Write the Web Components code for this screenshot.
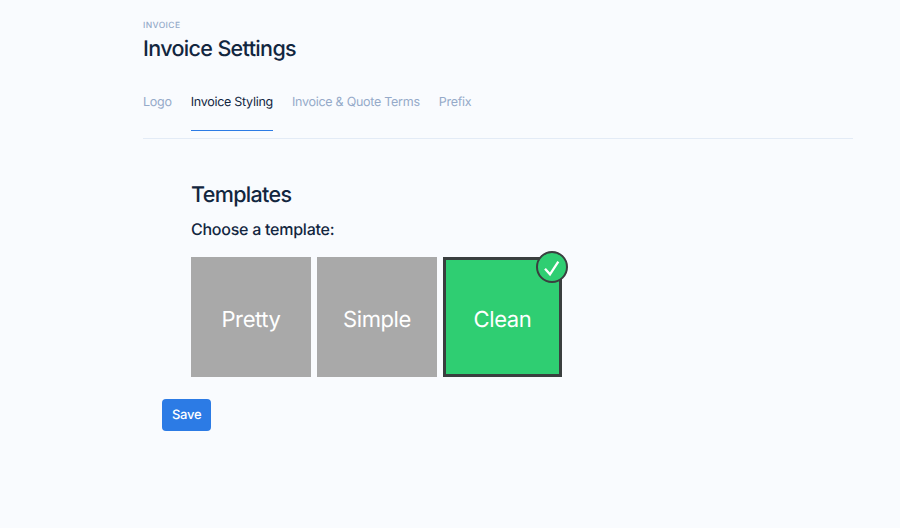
<!DOCTYPE html>
<html>
<head>
<meta charset="utf-8">
<title>Invoice Settings</title>
<style>
  html, body { margin: 0; height: 100%; background: #f9fbfe; }
  body {
    font-family: Inter, "Liberation Sans", sans-serif;
    color: #12263f;
    overflow: hidden;
    text-rendering: geometricPrecision;
  }
</style>
</head>
<body>
<settings-page>
  <page-header eyebrow="INVOICE" title="Invoice Settings"></page-header>
  <tab-bar>
    <tab-item>Logo</tab-item>
    <tab-item active>Invoice Styling</tab-item>
    <tab-item>Invoice &amp; Quote Terms</tab-item>
    <tab-item>Prefix</tab-item>
  </tab-bar>
  <template-picker>
    <template-card>Pretty</template-card>
    <template-card>Simple</template-card>
    <template-card selected>Clean</template-card>
  </template-picker>
  <save-button>Save</save-button>
</settings-page>

<script>
class SettingsPage extends HTMLElement {
  constructor() {
    super();
    this.attachShadow({ mode: 'open' });
    this.shadowRoot.innerHTML = `
      <style>
        :host { display: block; padding: 20px 47px 0 143px; }
      </style>
      <slot></slot>
    `;
  }
}

class PageHeader extends HTMLElement {
  constructor() {
    super();
    this.attachShadow({ mode: 'open' });
  }

  connectedCallback() {
    this.shadowRoot.innerHTML = `
      <style>
        :host { display: block; }
        .eyebrow {
          font-size: 8.5px;
          line-height: 13px;
          font-weight: 500;
          letter-spacing: 0.4px;
          color: #95aac9;
        }
        h1 {
          margin: 2px 0 0 0;
          font-size: 21.5px;
          line-height: 28px;
          font-weight: 500;
          letter-spacing: -0.65px;
          color: #12263f;
        }
      </style>
      <div class="eyebrow">${this.getAttribute('eyebrow') || ''}</div>
      <h1>${this.getAttribute('title') || ''}</h1>
    `;
  }
}

class TabBar extends HTMLElement {
  constructor() {
    super();
    this.attachShadow({ mode: 'open' });
    this.shadowRoot.innerHTML = `
      <style>
        :host {
          display: flex;
          gap: 19px;
          margin-top: 13px;
          border-bottom: 1px solid #e3ebf6;
        }
      </style>
      <slot></slot>
    `;
  }
}

class TabItem extends HTMLElement {
  constructor() {
    super();
    this.attachShadow({ mode: 'open' });
    this.shadowRoot.innerHTML = `
      <style>
        :host {
          display: block;
          font-size: 12.5px;
          line-height: 20px;
          letter-spacing: -0.27px;
          padding: 17px 0 17px 0;
          margin-bottom: 7px;
          color: #95aac9;
          border-bottom: 1px solid transparent;
        }
        :host([active]) {
          color: #12263f;
          border-bottom-color: #2c7be5;
        }
      </style>
      <slot></slot>
    `;
  }
}

class TemplatePicker extends HTMLElement {
  constructor() {
    super();
    this.attachShadow({ mode: 'open' });
    this.shadowRoot.innerHTML = `
      <style>
        :host { display: block; padding: 42px 0 0 48px; }
        h2 {
          margin: 0;
          font-size: 21.5px;
          line-height: 28px;
          font-weight: 500;
          letter-spacing: -0.65px;
          color: #12263f;
        }
        h3 {
          margin: 8px 0 0 0;
          font-size: 16px;
          line-height: 24px;
          font-weight: 500;
          letter-spacing: -0.25px;
          color: #12263f;
        }
        .cards { display: flex; gap: 6px; margin-top: 16px; }
      </style>
      <h2>Templates</h2>
      <h3>Choose a template:</h3>
      <div class="cards"><slot></slot></div>
    `;
  }
}

class TemplateCard extends HTMLElement {
  constructor() {
    super();
    this.attachShadow({ mode: 'open' });
    this.shadowRoot.innerHTML = `
      <style>
        :host {
          display: flex;
          position: relative;
          box-sizing: border-box;
          width: 120px;
          height: 120px;
          align-items: center;
          justify-content: center;
          background: #a9a9a9;
          color: #fff;
          font-size: 22px;
          letter-spacing: -0.4px;
          padding-top: 5px;
        }
        :host([selected]) {
          width: 119px;
          background: #2fce72;
          border: 3px solid #3a3f3f;
        }
        .check {
          display: none;
          position: absolute;
          top: -9px;
          right: -9px;
          box-sizing: border-box;
          width: 32px;
          height: 32px;
          border: 2px solid #3a3f3f;
          border-radius: 50%;
          background: #2fce72;
        }
        :host([selected]) .check { display: block; }
        .check svg { display: block; width: 28px; height: 28px; }
      </style>
      <slot></slot>
      <span class="check">
        <svg viewBox="0 0 28 28"><path d="M7 15.8l5 5.5L20.3 8.7" fill="none" stroke="#fff" stroke-width="2.3"/></svg>
      </span>
    `;
  }
}

class SaveButton extends HTMLElement {
  constructor() {
    super();
    this.attachShadow({ mode: 'open' });
    this.shadowRoot.innerHTML = `
      <style>
        :host {
          display: inline-block;
          margin: 22px 0 0 19px;
          padding: 8px 10px;
          font-size: 13px;
          line-height: 16px;
          font-weight: 500;
          letter-spacing: -0.3px;
          color: #fff;
          background: #2c7be5;
          border-radius: 4px;
        }
      </style>
      <slot></slot>
    `;
  }
}

customElements.define('settings-page', SettingsPage);
customElements.define('page-header', PageHeader);
customElements.define('tab-bar', TabBar);
customElements.define('tab-item', TabItem);
customElements.define('template-picker', TemplatePicker);
customElements.define('template-card', TemplateCard);
customElements.define('save-button', SaveButton);
</script>
</body>
</html>
